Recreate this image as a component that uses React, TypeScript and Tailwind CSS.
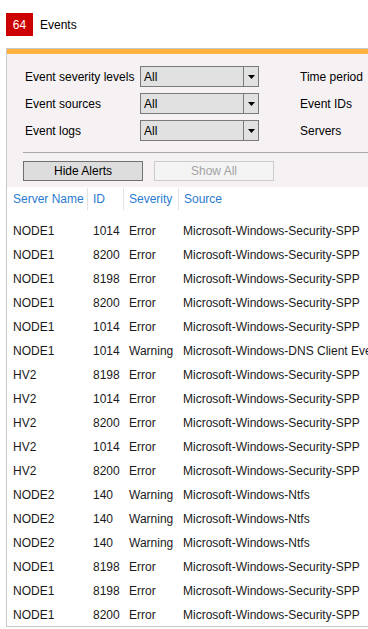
import React from "react";

const rows: [string, string, string, string][] = [
  ["NODE1", "1014", "Error", "Microsoft-Windows-Security-SPP"],
  ["NODE1", "8200", "Error", "Microsoft-Windows-Security-SPP"],
  ["NODE1", "8198", "Error", "Microsoft-Windows-Security-SPP"],
  ["NODE1", "8200", "Error", "Microsoft-Windows-Security-SPP"],
  ["NODE1", "1014", "Error", "Microsoft-Windows-Security-SPP"],
  ["NODE1", "1014", "Warning", "Microsoft-Windows-DNS Client Events"],
  ["HV2", "8198", "Error", "Microsoft-Windows-Security-SPP"],
  ["HV2", "1014", "Error", "Microsoft-Windows-Security-SPP"],
  ["HV2", "8200", "Error", "Microsoft-Windows-Security-SPP"],
  ["HV2", "1014", "Error", "Microsoft-Windows-Security-SPP"],
  ["HV2", "8200", "Error", "Microsoft-Windows-Security-SPP"],
  ["NODE2", "140", "Warning", "Microsoft-Windows-Ntfs"],
  ["NODE2", "140", "Warning", "Microsoft-Windows-Ntfs"],
  ["NODE2", "140", "Warning", "Microsoft-Windows-Ntfs"],
  ["NODE1", "8198", "Error", "Microsoft-Windows-Security-SPP"],
  ["NODE1", "8198", "Error", "Microsoft-Windows-Security-SPP"],
  ["NODE1", "8200", "Error", "Microsoft-Windows-Security-SPP"],
];

function Select() {
  return (
    <div className="flex h-[21px] w-[119px] border border-[#7a7a7a] bg-[#e1e1e1]">
      <div className="flex flex-1 items-center pl-[3px] text-[12px] text-black">All</div>
      <div className="flex w-[15px] items-center justify-center border-l border-[#7a7a7a]">
        <svg width="7" height="4" viewBox="0 0 7 4">
          <path d="M0 0 L7 0 L3.5 4 Z" fill="#000" />
        </svg>
      </div>
    </div>
  );
}

function FilterRow({ label, right }: { label: string; right: string }) {
  return (
    <div className="flex h-[21px] items-center">
      <div className="w-[115px] text-[12px] text-black">{label}</div>
      <Select />
      <div className="ml-[41px] whitespace-nowrap text-[12px] text-black">{right}</div>
    </div>
  );
}

export default function App() {
  return (
    <div
      className="h-[629px] w-[368px] overflow-hidden bg-white"
      style={{ fontFamily: '"Liberation Sans", Arial, sans-serif' }}
    >
      <div className="flex h-[48px] items-start pt-[13px] pl-[6px]">
        <div className="flex h-[23px] w-[27px] items-center justify-center bg-[#cc0000] text-[12px] text-white">
          64
        </div>
        <div className="ml-[7px] flex h-[23px] items-center text-[12px] text-black">Events</div>
      </div>
      <div className="ml-[6px] h-[579px] w-[420px] border-t border-l border-b border-[#c9c9c9] bg-white">
        <div className="h-[5px] bg-[#ffb142]" />
        <div className="bg-[#f6f2f4] pl-[18px]">
          <div className="flex flex-col gap-[6px] pt-[12px]">
            <FilterRow label="Event severity levels" right="Time period" />
            <FilterRow label="Event sources" right="Event IDs" />
            <FilterRow label="Event logs" right="Servers" />
          </div>
          <div className="mt-[11px] h-px bg-[#a9a9a9] ml-[-2px]" />
          <div className="flex gap-[11px] pt-[8px] pb-[6px] ml-[-2px]">
            <div className="flex h-[20px] w-[120px] items-center justify-center border border-[#707070] bg-[#dddddd] text-[12px] text-black">
              Hide Alerts
            </div>
            <div className="flex h-[20px] w-[120px] items-center justify-center border border-[#cccccc] bg-[#f4f4f4] text-[12px] text-[#a3a3a3]">
              Show All
            </div>
          </div>
        </div>
        <div className="flex h-[26px] items-start pt-[1px] text-[12px] text-[#2b7bd0]">
          <div className="flex h-[22px] w-[80px] items-center pl-[6px]">Server Name</div>
          <div className="flex h-[22px] w-[36px] items-center border-l border-[#e3e3e3] pl-[5px]">ID</div>
          <div className="flex h-[22px] w-[55px] items-center border-l border-[#e3e3e3] pl-[5px]">Severity</div>
          <div className="flex h-[22px] flex-1 items-center border-l border-[#e3e3e3] pl-[5px]">Source</div>
        </div>
        <div className="mt-[6px] flex flex-col">
          {rows.map((r, i) => (
            <div key={i} className="flex h-[24px] items-center text-[12px] text-[#1a1a1a] whitespace-nowrap">
              <div className="w-[80px] pl-[6px]">{r[0]}</div>
              <div className="w-[36px] pl-[6px]">{r[1]}</div>
              <div className="w-[55px] pl-[6px]">{r[2]}</div>
              <div className="flex-1 pl-[5px]">{r[3]}</div>
            </div>
          ))}
        </div>
      </div>
    </div>
  );
}
